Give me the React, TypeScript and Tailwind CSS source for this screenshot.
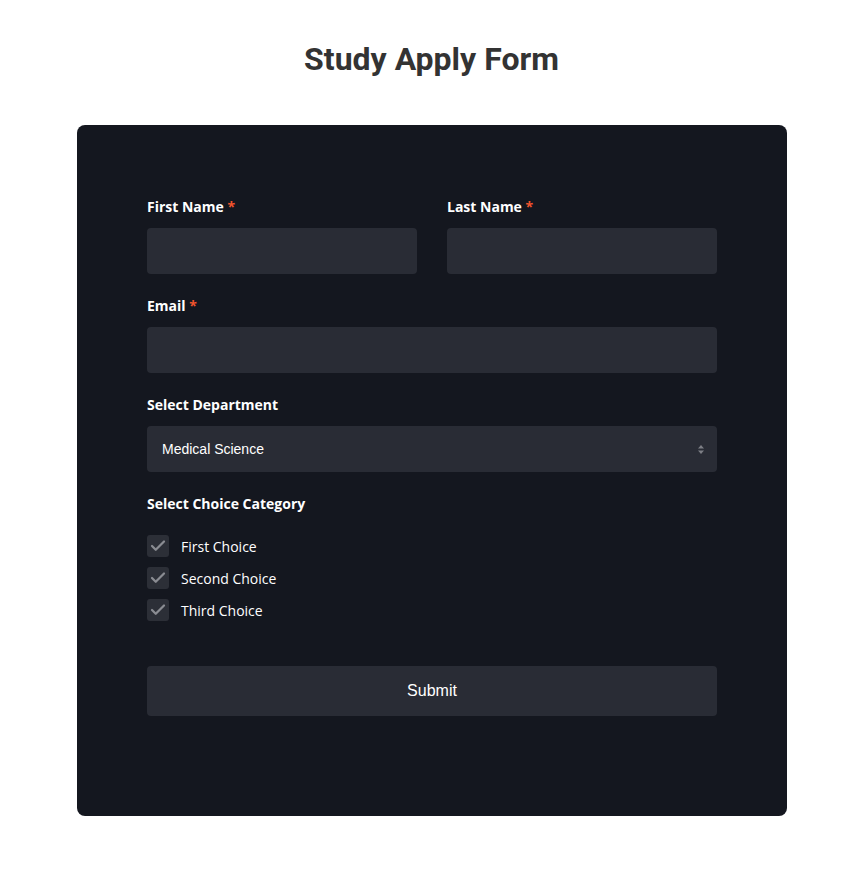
import { Check } from "lucide-react"

const choices = ["First Choice", "Second Choice", "Third Choice"]

function Label({ text, required }: { text: string; required?: boolean }) {
    return (
        <label className="block text-[14px] leading-[20px] font-bold text-white mb-[11px]" style={{ fontFamily: '"Open Sans", sans-serif' }}>
            {text}
            {required && <span className="text-[#f2542d]"> *</span>}
        </label>
    )
}

export default function App() {
    return (
        <div className="min-h-[880px] bg-white pt-[40px]" style={{ fontFamily: '"Open Sans", sans-serif' }}>
            <h1 className="text-center text-[32px] leading-[38px] font-bold text-[#333333]" style={{ fontFamily: 'Roboto, sans-serif' }}>
                Study Apply Form
            </h1>

            <div className="ml-[77px] w-[710px] mt-[47px] bg-[#14171f] rounded-lg px-[70px] pt-[72px] h-[691px]">
                {/* Name row */}
                <div className="grid grid-cols-2 gap-[30px] mb-[22px]">
                    <div>
                        <Label text="First Name" required />
                        <div className="h-[46px] rounded bg-[#292c35]" />
                    </div>
                    <div>
                        <Label text="Last Name" required />
                        <div className="h-[46px] rounded bg-[#292c35]" />
                    </div>
                </div>

                <div className="mb-[22px]">
                    <Label text="Email" required />
                    <div className="h-[46px] rounded bg-[#292c35]" />
                </div>

                <div className="mb-[22px]">
                    <Label text="Select Department" />
                    <div className="h-[46px] rounded bg-[#292c35] flex items-center justify-between pl-[15px] pr-[13px]">
                        <span className="text-[14px] text-white" style={{ fontFamily: '"Liberation Sans", Arial, sans-serif' }}>Medical Science</span>
                        <svg width="6" height="9" viewBox="0 0 6 9" className="text-[#7d7f86]">
                            <path d="M3 0 L6 3.5 L0 3.5 Z" fill="currentColor" />
                            <path d="M0 5.5 L6 5.5 L3 9 Z" fill="currentColor" />
                        </svg>
                    </div>
                </div>

                <div>
                    <Label text="Select Choice Category" />
                    <div className="flex flex-col gap-[10px] pt-[10px]">
                        {choices.map((c) => (
                            <div key={c} className="flex items-center gap-[12px]">
                                <div className="w-[22px] h-[22px] rounded-[3px] bg-[#2c2f37] flex items-center justify-center">
                                    <Check size={18} strokeWidth={3} className="text-[#8a8c92]" />
                                </div>
                                <span className="text-[14px] text-white">{c}</span>
                            </div>
                        ))}
                    </div>
                </div>

                <button
                    className="mt-[45px] w-full h-[50px] rounded bg-[#292c35] text-white text-[16px]"
                    style={{ fontFamily: '"Liberation Sans", Arial, sans-serif' }}
                >
                    Submit
                </button>
            </div>
        </div>
    )
}
